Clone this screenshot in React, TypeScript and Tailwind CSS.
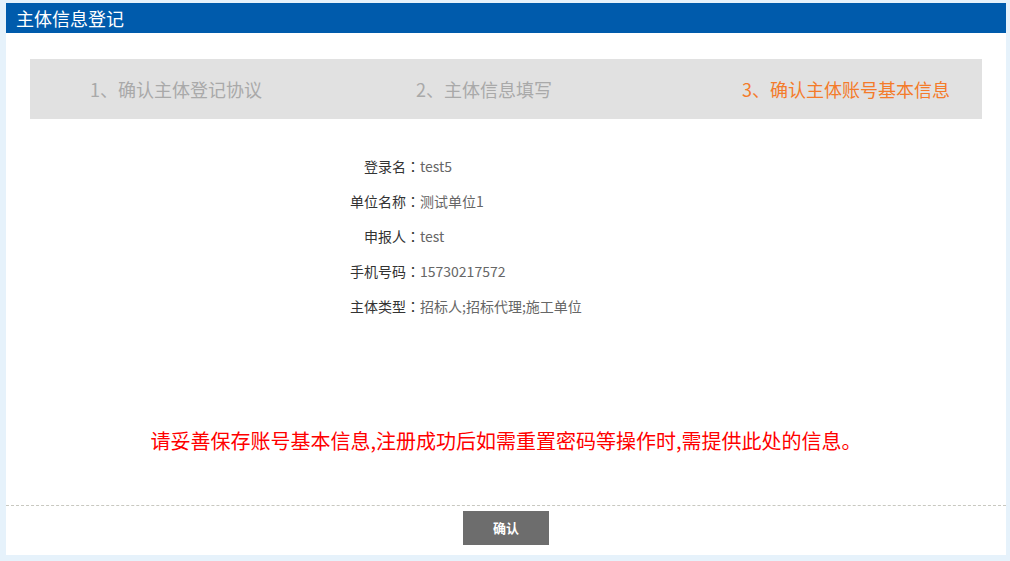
import React from 'react';

const steps = [
  { label: '1、确认主体登记协议', active: false },
  { label: '2、主体信息填写', active: false },
  { label: '3、确认主体账号基本信息', active: true },
];

const fields = [
  { label: '登录名', value: 'test5' },
  { label: '单位名称', value: '测试单位1' },
  { label: '申报人', value: 'test' },
  { label: '手机号码', value: '15730217572' },
  { label: '主体类型', value: '招标人;招标代理;施工单位' },
];

const App = () => {
  return (
    <div
      className="min-h-screen bg-[#e6f2fb] pt-[3px] pl-[6px] pr-[4px] pb-[6px]"
      style={{ fontFamily: '"Microsoft YaHei", "Noto Sans CJK SC", sans-serif' }}
    >
      <div className="bg-white w-[1000px] h-[552px] flex flex-col">
        <div className="h-[30px] bg-[#005bac] text-white text-[18px] leading-[30px] pl-[10px]">
          主体信息登记
        </div>

        <div className="px-[24px] pt-[26px]">
          <div className="h-[60px] bg-[#e1e1e1] flex items-center pl-[60px] overflow-hidden">
            {steps.map((s) => (
              <div
                key={s.label}
                className={
                  s.active
                    ? 'flex-1 whitespace-nowrap text-[18px] text-[#f47b2a]'
                    : 'w-[326px] shrink-0 whitespace-nowrap text-[18px] text-[#a9a9a9]'
                }
              >
                {s.label}
              </div>
            ))}
          </div>
        </div>

        <div className="pt-[38px] flex flex-col gap-[16px]">
          {fields.map((f) => (
            <div key={f.label} className="flex items-center h-[19px]">
              <div className="w-[414px] text-right text-[14px] text-[#333]">
                {f.label}
                <span className="font-['Noto_Sans_CJK_TC',sans-serif]">：</span>
              </div>
              <div className="text-[14px] text-[#666]">{f.value}</div>
            </div>
          ))}
        </div>

        <div className="pt-[110px] text-center text-[20px] text-[#ff0000]">
          请妥善保存账号基本信息,注册成功后如需重置密码等操作时,需提供此处的信息。
        </div>

        <div className="mt-auto border-t border-dashed border-[#c8c8c0] pt-[5px] pb-[10px] flex justify-center">
          <button className="w-[86px] h-[34px] bg-[#6d6d6d] text-white text-[13px] font-bold">
            确认
          </button>
        </div>
      </div>
    </div>
  );
};

export default App;
